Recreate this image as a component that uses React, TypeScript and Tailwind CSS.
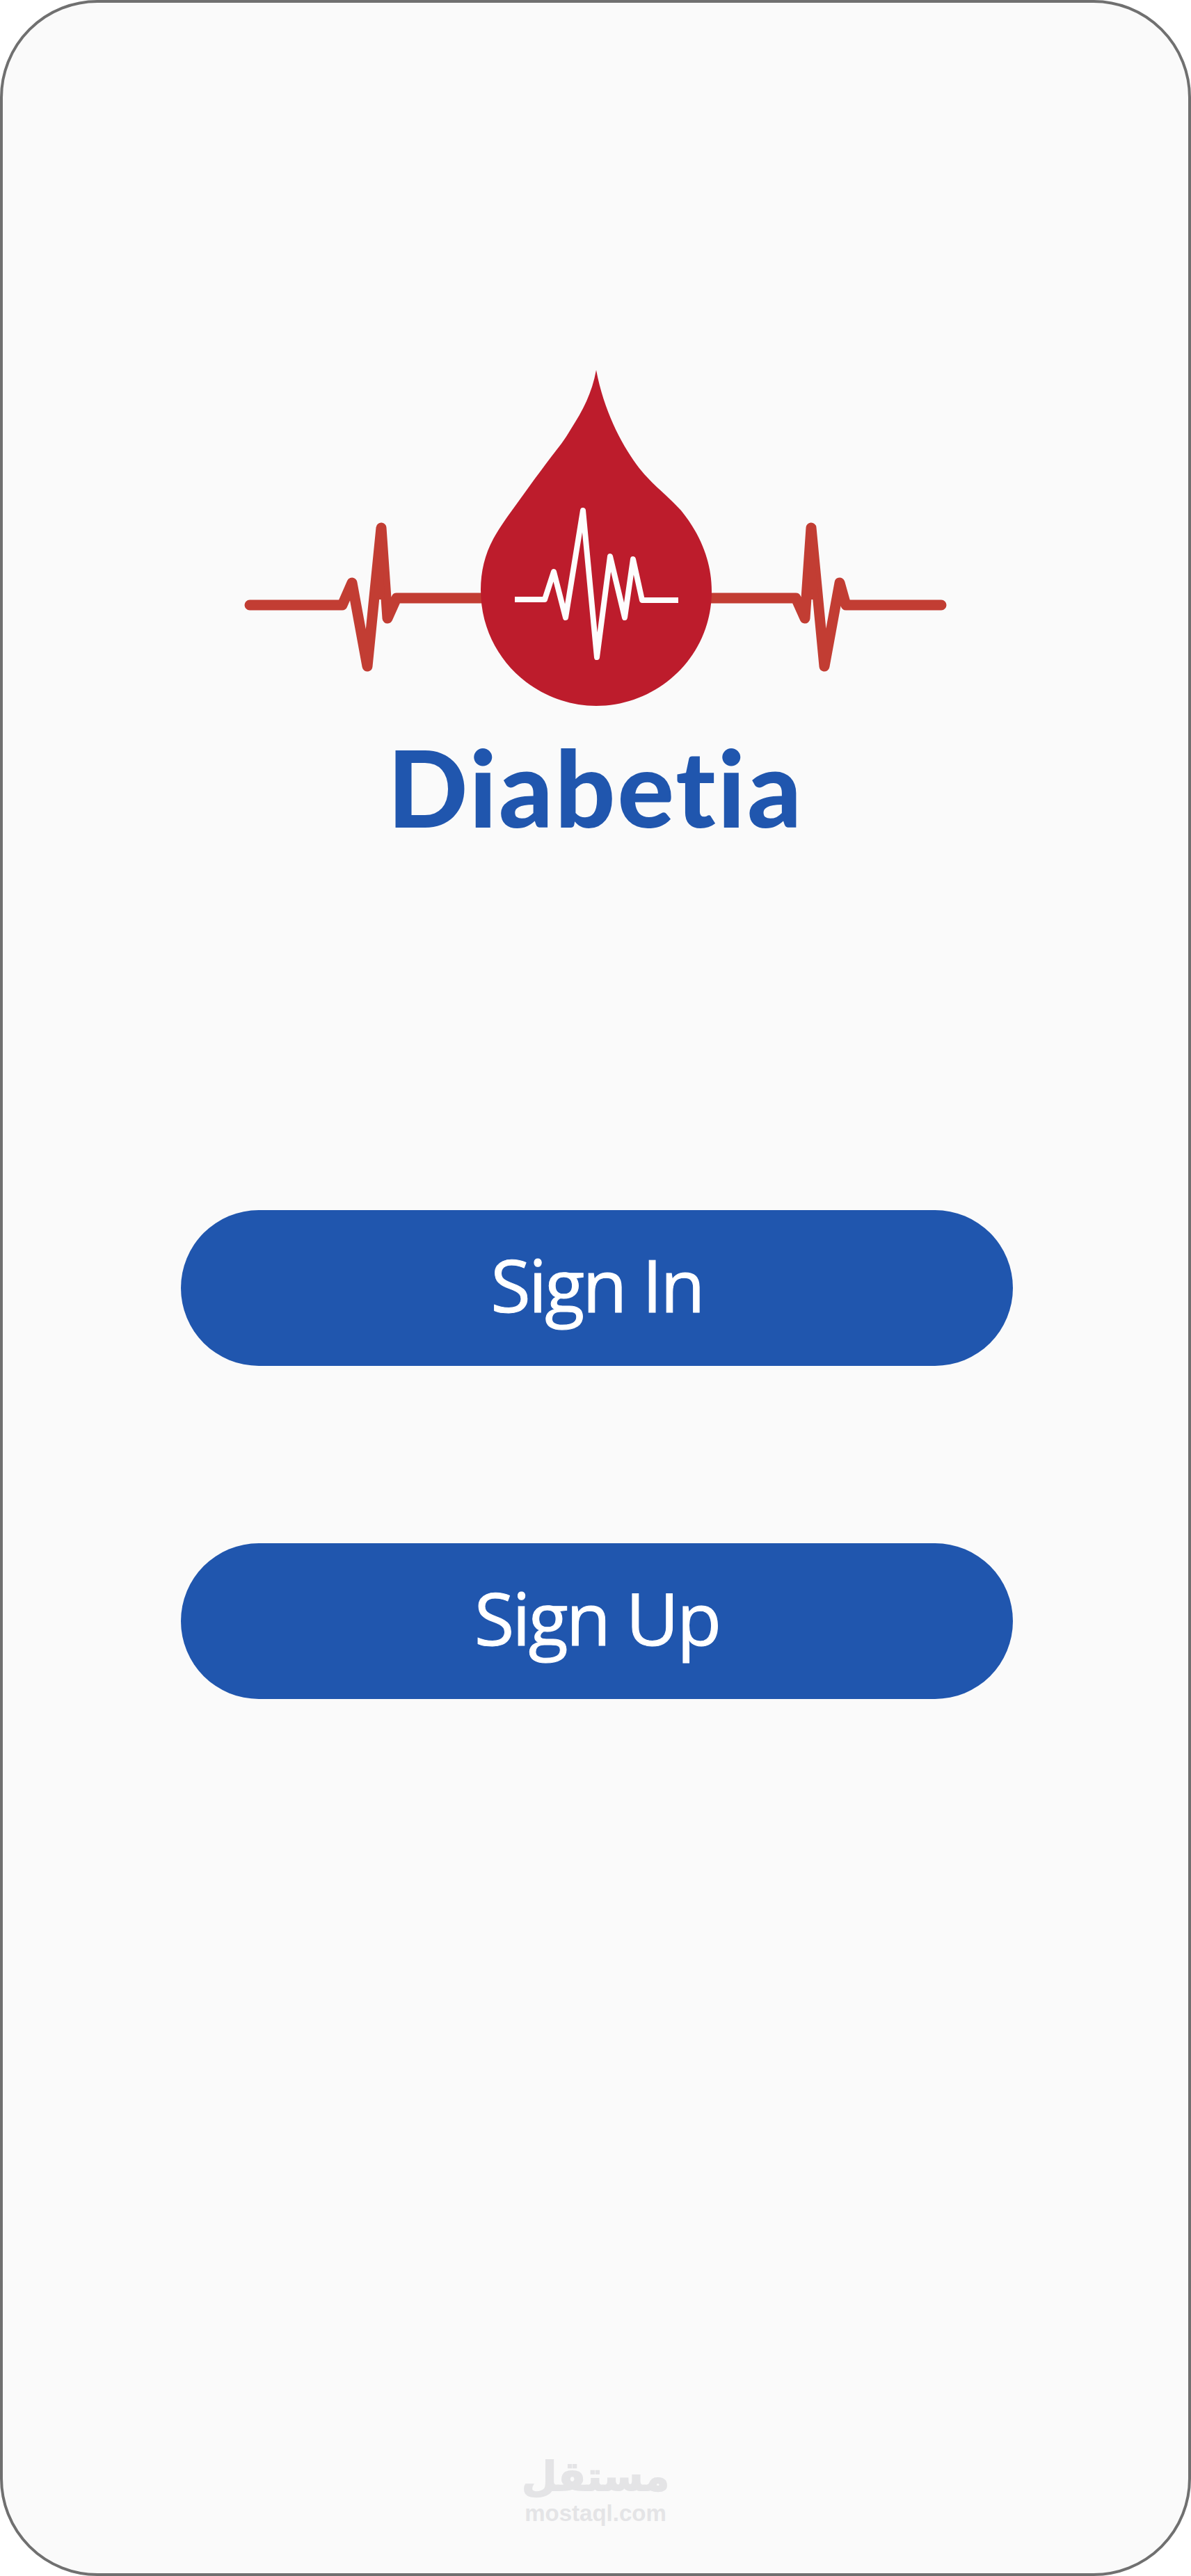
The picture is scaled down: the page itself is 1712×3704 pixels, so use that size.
const LogoMark = () => (
  <svg
    className="block w-[1012px] h-[490px] shrink-0"
    viewBox="350 528 1012 490"
    fill="none"
  >
    <path
      d="M359 870H492L506 838L528 958L548 759L557 889L570 860H700"
      stroke="#c23d33"
      strokeWidth={15}
      strokeLinecap="round"
      strokeLinejoin="round"
    />
    <path d="M548 759L537 862H553Z" fill="#c23d33" />
    <path
      d="M1353 870H1216L1207 838L1185 958L1166 759L1157 889L1144 860H1015"
      stroke="#c23d33"
      strokeWidth={15}
      strokeLinecap="round"
      strokeLinejoin="round"
    />
    <path d="M1166 759L1177 862H1161Z" fill="#c23d33" />
    <path
      d="M857 532C851 565 838 590 820 618C812 632 803 643 793 656C775 680 760 700 746 720C730 742 717 760 709 775C697 797 691 822 691 848C691 945 770 1015 857 1015C945 1015 1023 945 1023 850C1023 805 1005 766 979 734C955 708 935 695 915 668C892 636 868 590 857 532Z"
      fill="#bd1c2c"
    />
    <path
      d="M740 862H783L796 822L813 888L838 734L858 945L877 800L898 888L910 804L923 863H975"
      stroke="#fdfdfd"
      strokeWidth={8}
      strokeLinejoin="round"
    />
  </svg>
);

const AuthButton = ({ label }: { label: string }) => (
  <button className="flex items-center justify-center self-start ml-[256px] w-[1196px] h-[224px] pb-[12px] rounded-[112px] bg-[#2056ae] text-white font-['Open_Sans',sans-serif] font-medium text-[105px] tracking-[-3px] leading-none [-webkit-text-stroke:1px_white]">
    {label}
  </button>
);

export default function App() {
  return (
    <div className="flex flex-col items-center w-[1712px] h-[3704px] pt-[524px] border-[4px] border-[#707070] rounded-[140px] bg-[#fafafa]">
      <LogoMark />
      <h1 className="mt-[38px] h-[150px] font-['Lato',sans-serif] font-black text-[152px] tracking-[3px] leading-[150px] [font-variant-ligatures:none] text-[#2056ae]">
        Diabetia
      </h1>
      <div className="flex flex-col gap-[255px] w-full mt-[534px]">
        <AuthButton label="Sign In" />
        <AuthButton label="Sign Up" />
      </div>
      <div className="flex flex-col items-center mt-auto mb-[67px] text-[#e4e4e6]">
        <span className="font-['DejaVu_Sans',sans-serif] font-bold text-[58px] leading-[68px] [-webkit-text-stroke:2px_#e4e4e6]">
          مستقل
        </span>
        <span className="font-['Liberation_Sans',sans-serif] font-bold text-[33px] leading-[38px]">
          mostaql.com
        </span>
      </div>
    </div>
  );
}
